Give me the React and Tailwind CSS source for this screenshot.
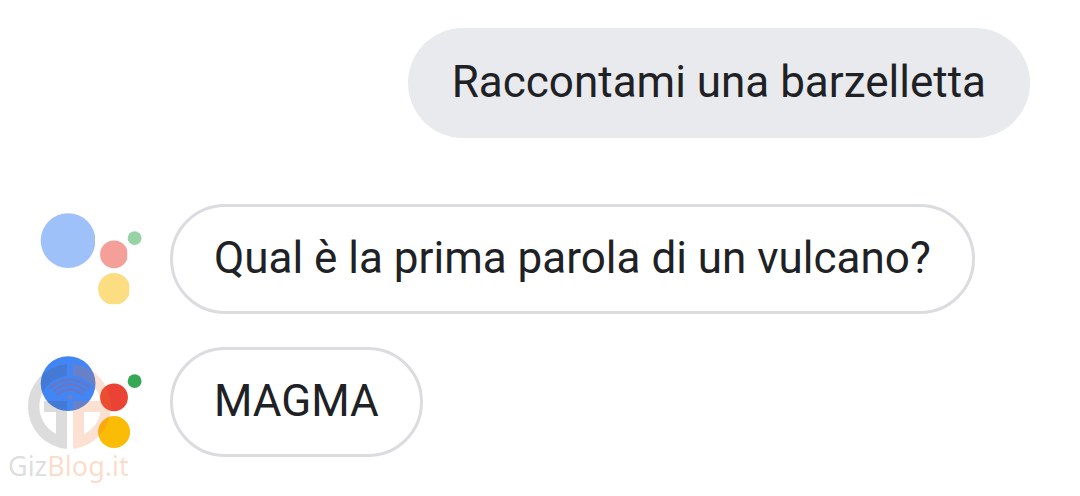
import React from 'react'
import clsx from 'clsx'

const replies = [
  { id: 1, text: 'Qual è la prima parola di un vulcano?', faded: true },
  { id: 2, text: 'MAGMA', watermark: true }
]

function AssistantLogo({ faded }) {
  return (
    <svg
      width="102"
      height="92"
      viewBox="0 0 102 92"
      className={clsx('block', faded && 'opacity-50')}
      aria-hidden="true"
    >
      {/* the faded logo is cut flat on a few edges */}
      <clipPath id="logo-cut">
        <path d="M0 0H55V60H0ZM58 0H102V33H58ZM58 27H87.3V56H58ZM56 58H89.3V91.3H56Z" />
      </clipPath>
      <g clipPath={faded ? 'url(#logo-cut)' : undefined}>
        <circle cx="28.1" cy="27.6" r="27.4" fill="#4285f4" />
        <circle cx="74" cy="41.4" r="13.9" fill="#ea4335" />
        <circle cx="74.1" cy="76" r="16" fill="#fbbc05" />
        <circle cx="94.6" cy="25.2" r="6.9" fill="#34a853" />
      </g>
    </svg>
  )
}

function Watermark() {
  return (
    <div className="absolute -left-8 top-2 w-32">
      <svg width="104" height="86" viewBox="8 364 104 86" className="block" aria-hidden="true">
        <g fill="#505050" fillOpacity="0.2">
          <path d="M67 364.2A42.54 42.54 0 0 0 67 449V401H44V412H56V434A31 31 0 0 1 67 375.7Z" />
        </g>
        <g fill="#f0702d" fillOpacity="0.22">
          <path
            fillRule="evenodd"
            d="M73 364.2A42.65 42.65 0 0 1 73 449V401H100.6A31 31 0 0 0 73 375.7ZM84 412V434.2A31 31 0 0 0 100.6 412Z"
          />
          <circle cx="70" cy="397.4" r="2.7" />
        </g>
        <g fill="none" stroke="#d0503d" strokeOpacity="0.28" strokeWidth="2.4">
          <path d="M50 388Q70 371.6 90 388" />
          <path d="M53.5 391.6Q70 377.4 86.5 391.6" />
          <path d="M57 394.8Q70 384 83 394.8" />
        </g>
      </svg>
      <p className="font-['Noto_Sans',sans-serif] text-[27px] leading-8 whitespace-nowrap">
        <span className="text-[#505050]/20">Giz</span>
        <span className="text-[#f0702d]/25">Blog.it</span>
      </p>
    </div>
  )
}

export default function App() {
  return (
    <main className="min-h-screen bg-white font-[Roboto,sans-serif] text-[44px] leading-[52px] text-[#202124]">
      <div className="flex justify-end pt-7 pr-[50px]">
        <p className="rounded-full bg-[#e8eaed] px-11 pt-7 pb-[30px]">Raccontami una barzelletta</p>
      </div>

      <ul className="mt-[66px] flex flex-col gap-[33px] pl-10">
        {replies.map((reply) => (
          <li key={reply.id} className="flex items-center gap-7">
            <div className="relative shrink-0">
              <AssistantLogo faded={reply.faded} />
              {reply.watermark && <Watermark />}
            </div>
            <p className="rounded-full border-3 border-[#dadce0] px-[41px] pt-[25px] pb-[27px]">{reply.text}</p>
          </li>
        ))}
      </ul>
    </main>
  )
}
